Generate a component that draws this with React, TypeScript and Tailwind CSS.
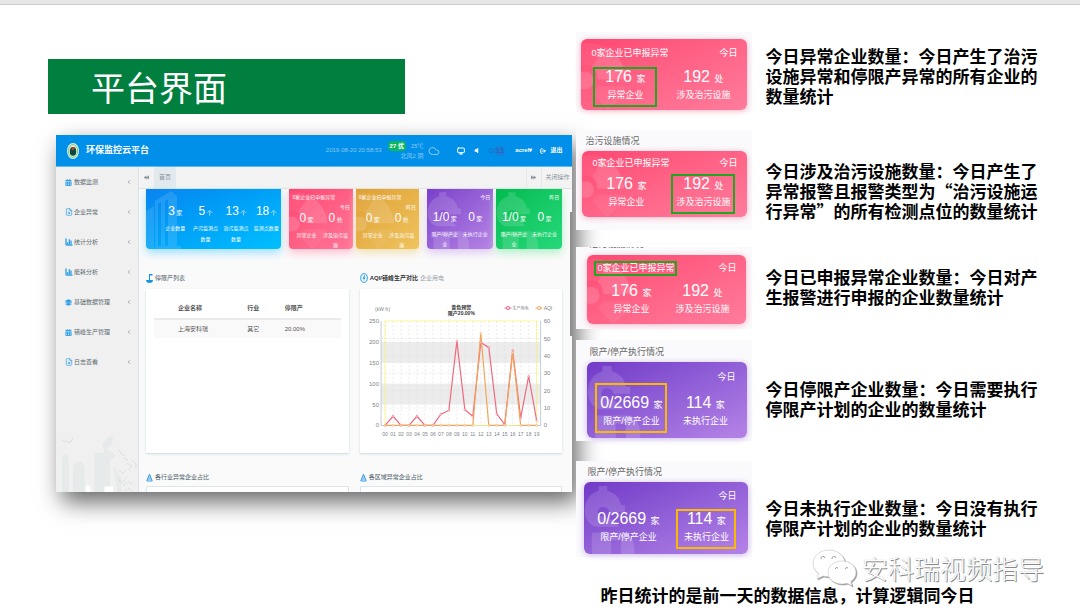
import type { ReactNode } from "react";
import { Bell, ChartColumn, ChevronLeft, Cloud, FileSearch, Layers, LogOut, Monitor } from "lucide-react";
import { FaBackward, FaCalendarAlt, FaForward, FaVolumeOff } from "react-icons/fa";

const menu = [
  { label: "数据监测", icon: <FaCalendarAlt className="size-[7px]" /> },
  { label: "企业异常", icon: <FileSearch className="size-2" /> },
  { label: "统计分析", icon: <ChartColumn className="size-2" strokeWidth={4} /> },
  { label: "能耗分析", icon: <ChartColumn className="size-2" strokeWidth={4} /> },
  { label: "基础数据管理", icon: <Layers className="size-[7px]" fill="currentColor" /> },
  { label: "错峰生产管理", icon: <FaCalendarAlt className="size-[7px]" /> },
  { label: "日志查看", icon: <FileSearch className="size-2" /> },
];

const production = [0, 22, 0, 0, 22, 0, 0, 27, 36, 202, 38, 22, 199, 187, 28, 2, 180, 18, 118, 12];
const aqi = [0, 0, 0, 0, 0, 0, 0, 0, 0, 0, 0, 0, 53, 0, 0, 0, 42, 0, 0, 0];

function Radiation({ className }: { className: string }) {
  return (
    <svg viewBox="0 0 50 72" className={className} fill="white" fillOpacity="0.14" aria-hidden="true">
      <circle cx="4" cy="42" r="9" />
      <path d="M17 41 C17 35 15 31 11 28 L24 8 C37 14 45 27 46 41Z" />
      <path d="M11 55 L27 72 C37 66 43 58 45 48 L17 48Z" fillOpacity="0.06" />
      <path d="M0 5 C8 3 16 4 24 8 L11 28 C7 26 4 26 0 27Z" fillOpacity="0.05" />
    </svg>
  );
}

function Coin({ className }: { className: string }) {
  return (
    <svg viewBox="0 0 54 74" className={className} fill="white" fillOpacity="0.14" aria-hidden="true">
      <path d="M15 4 H24 V9 C32 11 37 17 38 24 H42 V31 H26 C25 24 14 24 14 31 C14 38 30 34 36 46 H12 C3 43 0 35 1 26 C2 17 8 11 15 9Z" />
      <path d="M8 52 H42 C50 55 52 63 52 74 H38 V60 H28 V74 H8Z" />
    </svg>
  );
}

function Emblem() {
  return (
    <svg viewBox="0 0 12 16" className="h-4 w-3" aria-hidden="true">
      <ellipse cx="6" cy="8" rx="6" ry="8" fill="#d9efd2" />
      <ellipse cx="6" cy="8" rx="4.600" ry="6.400" fill="none" stroke="#6fb98a" strokeWidth="0.8" />
      <ellipse cx="6" cy="8.400" rx="3.200" ry="4.400" fill="#0b4b3f" />
      <circle cx="6" cy="5.600" r="1.600" fill="#c8372d" />
    </svg>
  );
}

function City() {
  return (
    <svg viewBox="0 0 83 57" className="mt-auto w-full" aria-hidden="true">
      <g fill="#e6eaea">
        <path d="M6 57V22l3.500-5 3.500 5v35zM17 57V31l3-5h5l4 5v26zM39 17h16v40H39z" />
        <path d="M47 8c3-5 7-8 10-8 2 5-1 10-6 13l9 6c-2 6-8 6-11 0z" />
        <path d="M58 30l8 12v15h-4z" />
      </g>
      <path d="M49 51h9v6h-9zM30 57v-5l2-3 3 3v5z" fill="#fff" />
      <path
        d="M6 4l3 2 3-1M12 7l3-1 2-4M64 14l2 4 4 2M69 22l4 3M78 25l3 4v4M64 35l4 3 3-4M72 28l5 2-4 5M63 44l4 3 5-6M68 50l5-4 4 3M70 55l4-2 3 3"
        fill="none"
        stroke="#d3d6d6"
        strokeWidth="1"
        strokeDasharray="2 1"
      />
    </svg>
  );
}

function Chart() {
  const left = 21;
  const right = 180;
  const top = 32;
  const bottom = 136;
  const step = (right - left) / 20;
  const x = (i: number) => left + step * (i + 0.5);
  const y = (v: number, max: number) => bottom - (v / max) * (bottom - top);
  const line = (data: number[], max: number) => data.map((v, i) => `${x(i)},${y(v, max)}`).join(" ");

  return (
    <svg viewBox="0 0 202 164" className="w-full" fontSize="6" fill="#7d848b">
      {[50, 150].map((v) => (
        <rect key={v} x={left} y={y(v + 50, 250)} width={right - left} height={(bottom - top) / 5} fill="#ececec" />
      ))}
      <g stroke="#dedede" strokeWidth="0.6" strokeDasharray="2 2">
        {production.map((_, i) => (
          <line key={i} x1={x(i)} x2={x(i)} y1={top} y2={bottom} />
        ))}
        {[10, 20, 30, 40, 50].map((v) => (
          <line key={v} x1={left} x2={right} y1={y(v, 60)} y2={y(v, 60)} />
        ))}
      </g>
      <path d={`M${left} ${top}V${bottom}H${right}V${top}`} fill="none" stroke="#c5cdd3" strokeWidth="1" />
      <rect x={x(0)} y={top} width={x(19) - x(0)} height={bottom - top} fill="none" stroke="#fbf36a" strokeWidth="1" strokeDasharray="2 1" />
      {[0, 50, 100, 150, 200, 250].map((v) => (
        <text key={v} x="19" y={y(v, 250) + 2} textAnchor="end">{v}</text>
      ))}
      {[0, 10, 20, 30, 40, 50, 60].map((v) => (
        <text key={v} x="183" y={y(v, 60) + 2}>{v}</text>
      ))}
      {production.map((_, i) => (
        <text key={i} x={x(i)} y="146" fontSize="5" textAnchor="middle">{String(i).padStart(2, "0")}</text>
      ))}
      <text x="15" y="22" fontSize="5">(kW·h)</text>
      <g fill="#333" textAnchor="middle" fontWeight="bold" fontSize="5">
        <text x="101" y="20">黄色预警</text>
        <text x="101" y="26">限产20.00%</text>
      </g>
      <g fill="white" strokeWidth="1">
        <path d="M144 19h7" stroke="#ee6b80" />
        <circle cx="147.500" cy="19" r="1.500" stroke="#ee6b80" />
        <path d="M175 19h7" stroke="#f2a65a" />
        <circle cx="178.500" cy="19" r="1.500" stroke="#f2a65a" />
      </g>
      <text x="152" y="21" fontSize="4">生产用电</text>
      <text x="183" y="21" fontSize="5">AQI</text>
      <polyline points={line(production, 250)} fill="none" stroke="#ee6b80" strokeWidth="1.200" />
      <polyline points={line(aqi, 60)} fill="none" stroke="#f2a65a" strokeWidth="1.200" />
      <g fill="white" strokeWidth="0.6">
        {production.map((v, i) => (
          <circle key={i} cx={x(i)} cy={y(v, 250)} r="0.9" stroke="#ee6b80" />
        ))}
        {aqi.map((v, i) => (
          <circle key={i} cx={x(i)} cy={y(v, 60)} r="0.9" stroke="#f2a65a" />
        ))}
      </g>
    </svg>
  );
}

function MiniStat({ value, unit, label }: { value: string; unit: string; label: string }) {
  return (
    <div className="min-w-0 flex-1 text-center">
      <p className="whitespace-nowrap text-[12px] leading-3">
        {value} <span className="-ml-0.5 text-[6px]">{unit}</span>
      </p>
      <p className="mt-1 leading-[10px]">{label}</p>
    </div>
  );
}

type MiniCardProps = { tone: string; note?: string; day: string; art: ReactNode; children: ReactNode };

function MiniCard({ tone, note, day, art, children }: MiniCardProps) {
  return (
    <div className={`relative h-15 overflow-hidden rounded-b-[4px] px-[3px] pt-[3px] text-[5px] text-white ${tone}`}>
      {art}
      {note && <p className="relative leading-[10px]">{note}</p>}
      <p className={note ? "relative text-right leading-[10px]" : "relative mb-[9px] text-right leading-[10px]"}>{day}</p>
      <div className="relative flex gap-px">{children}</div>
    </div>
  );
}

function PanelTitle({ icon, children }: { icon: ReactNode; children: ReactNode }) {
  return (
    <h3 className="flex items-center gap-0.5 text-[6px] leading-[10px] text-[#4a5a68]">
      {icon}
      {children}
    </h3>
  );
}

function PinIcon() {
  return (
    <svg viewBox="0 0 7 10" className="h-2.5 w-[7px]" fill="#1296ea" aria-hidden="true">
      <path d="M0 7h7c0 2-1.500 3-3.500 3S0 9 0 7zM3 1h3.500v1.500H4V7H3z" />
    </svg>
  );
}

function BoltIcon() {
  return (
    <svg viewBox="0 0 8 10" className="h-2.5 w-2" aria-hidden="true">
      <ellipse cx="4" cy="5" rx="3.300" ry="4.300" fill="none" stroke="#1296ea" strokeWidth="0.9" />
      <path d="M4.500 2L2.500 5.500h1.300L3.500 8l2-3.500H4.200L5.200 2z" fill="#1296ea" />
    </svg>
  );
}

function FlaskIcon() {
  return (
    <svg viewBox="0 0 7 9" className="h-[9px] w-[7px]" aria-hidden="true">
      <path d="M3.500 1L0.800 8h5.400zM1.500 6h4M2.500 4h2" fill="none" stroke="#3a9fe8" strokeWidth="1" />
    </svg>
  );
}

function Dashboard() {
  return (
    <div className="relative ml-2 mt-[21px] bg-[#fafafa] shadow-[6px_10px_22px_rgba(0,0,0,0.6)]">
      <header className="flex h-8 items-center border-b border-[#5db9f0] bg-[#0090ea] pl-[11px] pr-2.5 text-[6px] text-white">
        <Emblem />
        <h2 className="ml-[7px] text-[9px] font-bold">环保监控云平台</h2>
        <time className="ml-auto text-[#8cc9f2]">2019-08-20 20:58:53</time>
        <div className="ml-1.5 w-9 text-right leading-[10px] text-[#8cc9f2]">
          <p className="flex items-center justify-between">
            <span className="rounded-[4px] bg-[#0bb562] px-0.5 font-bold text-white">27 优</span>
            25℃
          </p>
          <p>北风2 阴</p>
        </div>
        <Cloud className="ml-1 size-3 text-[#8cc9f2]" />
        <button aria-label="全屏" className="ml-[17px]">
          <Monitor className="size-2" strokeWidth={3} />
        </button>
        <button aria-label="声音" className="ml-2">
          <FaVolumeOff className="size-[7px]" />
        </button>
        <button aria-label="消息" className="ml-2 flex items-center text-[#1b62b4]">
          <Bell className="size-1.5" />
          <span className="rounded-full bg-[#1b7ed8] px-0.5 text-[7px] leading-2.5">13</span>
        </button>
        <button className="ml-2.5 font-bold">acrel▾</button>
        <a href="#logout" className="ml-2 flex items-center gap-1 font-bold">
          <LogOut className="size-1.5" strokeWidth={4} />
          退出
        </a>
      </header>

      <div className="flex">
        <aside className="flex w-[83px] shrink-0 flex-col border-r border-[#dbe3ea] bg-[#f0f0f0]">
          <nav>
            {menu.map((item) => (
              <a key={item.label} href="#menu" className="flex h-[30px] items-center pl-[9px] pr-1.5 text-[6px] text-[#5b6b70]">
                <span className="flex w-[9px] text-[#2f9fe6]">{item.icon}</span>
                {item.label}
                <ChevronLeft className="ml-auto size-1.5" />
              </a>
            ))}
          </nav>
          <City />
        </aside>

        <div className="min-w-0 flex-1">
          <div className="flex h-[22px] items-stretch border-b border-[#dfe3e6] bg-[#f3f3f3] text-[6px] text-[#8a9399]">
            <button aria-label="向左" className="w-[15px] pl-[5px]">
              <FaBackward className="size-[5px]" />
            </button>
            <button className="w-[22px] bg-[#e2eaee]">首页</button>
            <button aria-label="向右" className="ml-auto w-4 border-x border-[#e8e8e8] pl-1">
              <FaForward className="size-[5px]" />
            </button>
            <button className="w-[30px]">关闭操作</button>
          </div>

          <div className="pl-[7px] pr-2.5">
            <div className="grid grid-cols-[135fr_71fr_66fr_74fr_69fr] [&>*:nth-child(2)]:ml-2 [&>*:nth-child(3)]:ml-[3px] [&>*:nth-child(4)]:ml-2 [&>*:nth-child(5)]:ml-[3px]">
              <div className="relative flex h-15 overflow-hidden rounded-b-[4px] bg-linear-to-br from-[#0a84f0] to-[#00c0ff] pl-3.5 pt-[14px] text-[5px] text-white shadow-[0_4px_8px_#9fe0ff]">
                <svg viewBox="0 0 40 60" className="absolute bottom-0 left-0 h-15 w-10" fill="white" fillOpacity="0.12" aria-hidden="true">
                  <path d="M0 22l8-5v43H0zM9 12L25 2l6 5v50h4v3H9zM12 15v42h3V13zM19 12v45h3V10z" fillRule="evenodd" />
                </svg>
                {[
                  ["3", "家", "企业数量"],
                  ["5", "个", "产污监测点数量"],
                  ["13", "个", "治污监测点数量"],
                  ["18", "个", "监测点数量"],
                ].map(([value, unit, label]) => (
                  <div key={label} className="relative min-w-0 flex-1 px-px text-center">
                    <p className="whitespace-nowrap text-[12px] leading-4">
                      {value} <span className="-ml-0.5 text-[6px]">{unit}</span>
                    </p>
                    <p className="mt-0.5 leading-[11px]">{label}</p>
                  </div>
                ))}
              </div>
              <MiniCard tone="bg-linear-to-br from-[#ff4470] to-[#ff7599] shadow-[0_4px_8px_#ffc0d0]" note="0家企业已申报异常" day="今日" art={<Radiation className="absolute bottom-0 left-0 h-15" />}>
                <MiniStat value="0" unit="家" label="异常企业" />
                <MiniStat value="0" unit="处" label="涉及治污设施" />
              </MiniCard>
              <MiniCard tone="bg-linear-to-br from-[#dfa032] to-[#efc45e] shadow-[0_4px_8px_#f2e0b4]" note="0家企业已申报异常" day="昨日" art={<Radiation className="absolute bottom-0 left-0 h-15" />}>
                <MiniStat value="0" unit="家" label="异常企业" />
                <MiniStat value="0" unit="处" label="涉及治污设施" />
              </MiniCard>
              <MiniCard tone="bg-linear-to-br from-[#7b3fca] to-[#b784e4] shadow-[0_4px_8px_#dcc8f2]" day="今日" art={<Coin className="absolute bottom-0 left-0 h-15" />}>
                <MiniStat value="1/0" unit="家" label="限产/停产企业" />
                <MiniStat value="0" unit="家" label="未执行企业" />
              </MiniCard>
              <MiniCard tone="bg-linear-to-br from-[#00bb50] to-[#25d97b] shadow-[0_4px_8px_#b2eec9]" day="昨日" art={<Coin className="absolute bottom-0 left-0 h-15" />}>
                <MiniStat value="1/0" unit="家" label="限产/停产企业" />
                <MiniStat value="0" unit="家" label="未执行企业" />
              </MiniCard>
            </div>

            <div className="mt-6 grid grid-cols-2 gap-x-[11px]">
              <section>
                <PanelTitle icon={<PinIcon />}>停限产列表</PanelTitle>
                <div className="mt-1.5 h-[164px] bg-white px-2 pt-2.5 shadow-[0_1px_2px_#c9d8e2]">
                  <table className="w-full text-left text-[6px] text-[#555]">
                    <thead>
                      <tr className="h-5 border-b-2 border-[#ebebeb]">
                        <th className="w-1/2 pl-6">企业名称</th>
                        <th className="w-1/5">行业</th>
                        <th>停限产</th>
                      </tr>
                    </thead>
                    <tbody>
                      <tr className="h-[19px] bg-[#f9f9f9]">
                        <td className="pl-6">上海安科瑞</td>
                        <td>其它</td>
                        <td>20.00%</td>
                      </tr>
                    </tbody>
                  </table>
                </div>
              </section>
              <section>
                <PanelTitle icon={<BoltIcon />}>
                  <span className="font-bold text-[#333]">AQI/错峰生产对比</span>
                  <span className="text-[#9aa5ad]">企业用电</span>
                </PanelTitle>
                <div className="mt-1.5 h-[164px] bg-white shadow-[0_1px_2px_#c9d8e2]">
                  <Chart />
                </div>
              </section>
            </div>

            <div className="mt-[19px] grid grid-cols-2 gap-x-[11px]">
              {["各行业异常企业占比", "各区域异常企业占比"].map((title) => (
                <section key={title}>
                  <PanelTitle icon={<FlaskIcon />}>{title}</PanelTitle>
                  <div className="mt-1 h-1.5 border border-b-0 border-[#dde6ec] bg-white" />
                </section>
              ))}
            </div>
          </div>
        </div>
      </div>
      <span className="absolute right-0 top-[77px] h-[124px] w-0.5 bg-[#8f8f8f]" />
    </div>
  );
}

const marks = {
  none: "border-transparent",
  green: "border-[#1fa81f]",
  amber: "border-[#fbb900]",
};

type StatProps = { value: string; unit: string; label: string; mark?: keyof typeof marks; className?: string };

function Stat({ value, unit, label, mark = "none", className = "w-16" }: StatProps) {
  return (
    <div className={`whitespace-nowrap border-2 text-center ${marks[mark]} ${className}`}>
      <p className="text-[16px] leading-4">
        {value} <span className="text-[9px]">{unit}</span>
      </p>
      <p className="-mx-1 pb-0.5 text-[9px] leading-4">{label}</p>
    </div>
  );
}

function AbnormalCard({ className, marked }: { className: string; marked: "companies" | "facilities" | "reported" }) {
  return (
    <div className={`relative flex flex-col rounded-[6px] bg-linear-to-br from-[#ff4772] to-[#ff7b9c] pb-[3px] text-white shadow-[0_1px_6px_#ffb4c6] ${className}`}>
      <Radiation className="absolute bottom-0 left-0 h-full" />
      <div className="relative flex justify-between pl-[7px] pr-2.5 text-[9px] leading-[11px]">
        <span className={`border-2 px-px ${marked === "reported" ? marks.green : marks.none}`}>0家企业已申报异常</span>
        <span className="py-0.5">今日</span>
      </div>
      <div className="relative mt-auto flex justify-between px-3">
        <Stat value="176" unit="家" label="异常企业" mark={marked === "companies" ? "green" : "none"} />
        <Stat value="192" unit="处" label="涉及治污设施" mark={marked === "facilities" ? "green" : "none"} />
      </div>
    </div>
  );
}

function LimitCard({ className, marked }: { className: string; marked: "planned" | "idle" }) {
  return (
    <div className={`relative flex flex-col rounded-[6px] bg-linear-to-br from-[#7239c8] to-[#b583e6] text-white shadow-[0_1px_6px_#cdb6f0] ${className}`}>
      <Coin className="absolute bottom-0 left-0 h-full" />
      <div className="relative flex flex-1 items-end justify-between pl-2 pr-3">
        <Stat className={marked === "planned" ? "w-[72px] pt-2.5" : "w-[72px]"} value="0/2669" unit="家" label="限产/停产企业" mark={marked === "planned" ? "amber" : "none"} />
        <div className="flex flex-col items-end justify-between self-stretch">
          <p className="text-[9px] leading-[13px]">今日</p>
          <Stat className="w-15" value="114" unit="家" label="未执行企业" mark={marked === "idle" ? "amber" : "none"} />
        </div>
      </div>
    </div>
  );
}

function Row({ className, textClass, snippet, children }: { className: string; textClass: string; snippet: ReactNode; children: string }) {
  return (
    <article className={`flex ${className}`}>
      <div className="w-44 shrink-0 bg-[#fafafc] text-[9px] text-[#666]">{snippet}</div>
      <p className={`flex-1 pl-[13px] font-['Noto_Sans_CJK_SC',sans-serif] text-[17px] font-bold leading-5 text-black ${textClass}`}>{children}</p>
    </article>
  );
}

export default function App() {
  return (
    <div lang="zh-CN" className="relative min-h-screen overflow-hidden bg-white font-['Liberation_Sans','Noto_Sans_CJK_SC',sans-serif]">
      <div className="h-[5px] border-b border-[#cbcbcb] bg-[#e6e6e6]" />
      <main className="flex">
        <div className="w-[53%] pl-12 pt-[54px]">
          <h1 className="w-[68%] bg-[#007f3e] pl-[43px] font-['Noto_Sans_CJK_SC',sans-serif] text-[34px] leading-[55px] text-white">平台界面</h1>
          <Dashboard />
        </div>

        <div className="relative flex-1 pl-1 pt-[27px]">
          <div className="pr-9">
            <Row className="h-20" textClass="pt-3.5" snippet={<AbnormalCard marked="companies" className="mx-[5px] mt-[7px] h-[71px] pt-[7px]" />}>
              今日异常企业数量：今日产生了治污设施异常和停限产异常的所有企业的数量统计
            </Row>
            <Row
              className="mt-[18px] h-[100px]"
              textClass="pt-[31px]"
              snippet={
                <>
                  <h4 className="pl-[9px] pt-1 leading-[14px]">治污设施情况</h4>
                  <AbnormalCard marked="facilities" className="ml-1.5 mr-[5px] mt-[3px] h-[66px] pt-[5px]" />
                </>
              }
            >
              今日涉及治污设施数量：今日产生了异常报警且报警类型为“治污设施运行异常”的所有检测点位的数量统计
            </Row>
            <Row
              className="mt-[17px] h-[82px]"
              textClass="pt-5"
              snippet={
                <>
                  <h4 className="flex h-0.5 items-end overflow-hidden pl-[13px] leading-[9px]">治污设施情况</h4>
                  <AbnormalCard marked="reported" className="ml-[11px] mr-1.5 mt-1.5 h-[69px] pt-1.5" />
                </>
              }
            >
              今日已申报异常企业数量：今日对产生报警进行申报的企业数量统计
            </Row>
            <Row
              className="mt-[11px] h-[101px]"
              textClass="pt-[39px]"
              snippet={
                <>
                  <h4 className="pl-[13px] pt-1 leading-4">限产/停产执行情况</h4>
                  <LimitCard marked="planned" className="ml-[11px] mr-[5px] mt-0.5 h-[76px] pb-[5px] pt-[9px]" />
                </>
              }
            >
              今日停限产企业数量：今日需要执行停限产计划的企业的数量统计
            </Row>
            <Row
              className="mt-5 h-24"
              textClass="pt-[37px]"
              snippet={
                <>
                  <h4 className="pl-[11px] pt-[3px] leading-4">限产/停产执行情况</h4>
                  <LimitCard marked="idle" className="ml-2 mr-1 mt-0.5 h-[72px] pb-[5px] pt-2" />
                </>
              }
            >
              今日未执行企业数量：今日没有执行停限产计划的企业的数量统计
            </Row>
          </div>
          <p className="mt-[26px] pl-6 font-['Noto_Sans_CJK_SC',sans-serif] text-[17px] font-bold leading-6">昨日统计的是前一天的数据信息，计算逻辑同今日</p>
        </div>
      </main>

      <div className="absolute bottom-7 right-9 flex items-center gap-1">
        <svg viewBox="0 0 46 38" className="w-[46px] drop-shadow-[1px_1px_0_#999]" fill="white" stroke="#c4c4c4" strokeWidth="0.6" aria-hidden="true">
          <path d="M17 1C8 1 1 7 1 14.500c0 4 2 7.500 5.500 10L5 30l6-3c2 .5 4 .8 6 .8 9 0 16-6 16-13.300S26 1 17 1z" />
          <path d="M30 12c-8 0-14 5-14 11.500S22 35 30 35c2 0 3.500-.3 5-.8l5 2.800-1.200-4.500C42 30.500 44 27.300 44 23.500 44 17 38 12 30 12z" />
          <g fill="none" stroke="#999" strokeWidth="1">
            <path d="M9 10a2 2 0 0 1 4-1M20 10a2 2 0 0 1 4-1M23 20a2 2 0 0 1 3-1M33 20a2 2 0 0 1 3-1" />
          </g>
        </svg>
        <span className="font-['Noto_Sans_CJK_SC',sans-serif] text-[26px] font-light leading-10 text-white [text-shadow:1px_1px_0_#888,0_0_1px_#aaa]">安科瑞视频指导</span>
      </div>
    </div>
  );
}
